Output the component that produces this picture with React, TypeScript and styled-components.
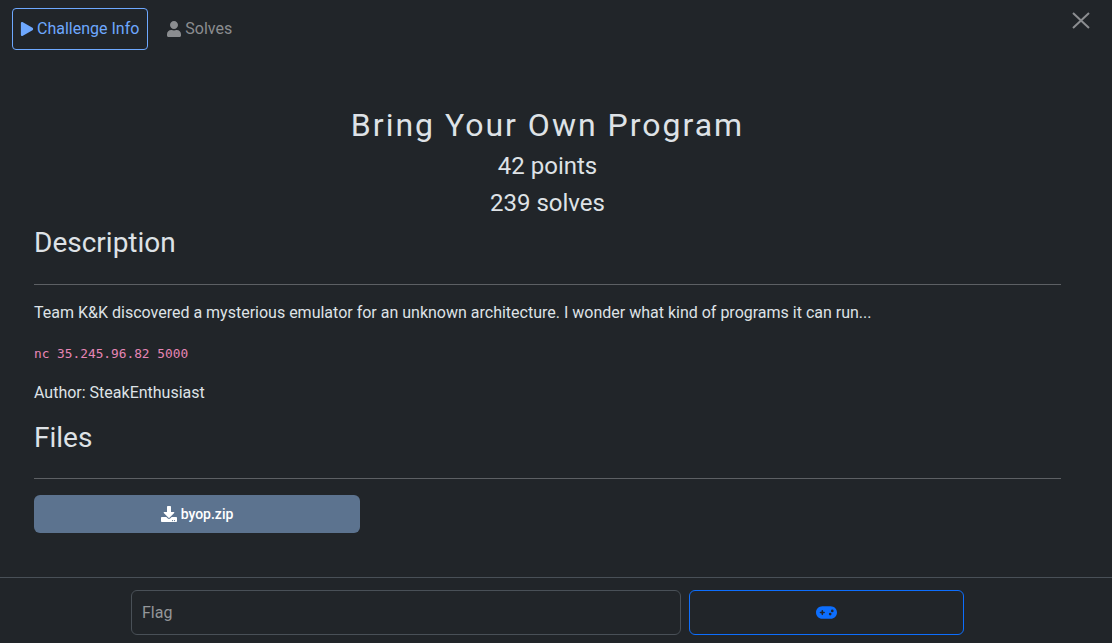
import { FC } from "react";
import styled, { createGlobalStyle } from "styled-components";
import { FaDownload, FaPlay, FaUser } from "react-icons/fa";
import { FaGamepad } from "react-icons/fa6";

const GlobalStyle = createGlobalStyle`
  html, body {
    margin: 0;
    height: 100%;
    background-color: #212529;
  }
  * { box-sizing: border-box; }
`;

const Modal = styled.div`
  width: 1112px;
  height: 643px;
  display: flex;
  flex-direction: column;
  overflow: hidden;
  background-color: #212529;
  color: #dee2e6;
  font-family: Roboto, "Liberation Sans", sans-serif;
  font-size: 16px;
  line-height: 24px;
`;

const TabBar = styled.nav`
  display: flex;
  align-items: flex-start;
  justify-content: space-between;
  padding: 8px 22px 0 12px;
`;

const Tabs = styled.div`
  display: flex;
  gap: 9px;
`;

const Tab = styled.button<{ $active?: boolean }>`
  display: flex;
  align-items: center;
  gap: 3px;
  height: 42px;
  padding: 0 8px 0 ${p => (p.$active ? "7px" : "8px")};
  border: 1px solid ${p => (p.$active ? "#6ea8fe" : "transparent")};
  border-radius: 4px;
  background: none;
  color: ${p => (p.$active ? "#6ea8fe" : "#8b8d90")};
  font: inherit;
  font-size: 16px;
`;

const CloseBtn = styled.button`
  padding: 0;
  margin-top: 4px;
  display: block;
  width: 18px;
  height: 17px;
  border: none;
  background: none;
  color: #8b8d90;
`;

const Body = styled.main`
  flex: 1;
  padding: 56px 51px 0 34px;
`;

const Header = styled.header`
  text-align: center;
  margin-bottom: 6px;
`;

const Title = styled.h1`
  margin: 0 0 8px;
  font-size: 32px;
  line-height: 1.2;
  font-weight: 400;
  letter-spacing: 2px;
`;

const Stat = styled.div`
  font-size: 24px;
  line-height: 1.2;
  margin-bottom: 8px;
`;

const SectionTitle = styled.h2`
  margin: 0 0 24px;
  font-size: 28px;
  line-height: 1.2;
  font-weight: 400;
`;

const Rule = styled.hr`
  margin: 16px 0;
  border: none;
  border-top: 1px solid #5d6064;
`;

const Para = styled.p`
  margin: 0 0 16px;
`;

const Code = styled.code`
  display: block;
  margin-bottom: 16px;
  padding-top: 1px;
  font-family: "DejaVu Sans Mono", "Liberation Mono", monospace;
  font-size: 12.8px;
  line-height: 23px;
  color: #e685b5;
`;

const FileBtn = styled.a`
  display: flex;
  align-items: center;
  justify-content: center;
  gap: 4px;
  width: 326px;
  height: 38px;
  margin-top: 16px;
  border-radius: 6px;
  background-color: #5c738f;
  color: #fff;
  font-weight: 500;
  font-size: 14px;
`;

const Footer = styled.footer`
  display: flex;
  justify-content: center;
  gap: 8px;
  height: 66px;
  padding: 12px 148px 0 131px;
  border-top: 1px solid #495057;
`;

const FlagInput = styled.input`
  flex: none;
  width: 550px;
  height: 45px;
  padding: 0 10px;
  border: 1px solid #495057;
  border-radius: 6px;
  background: #212529;
  color: #dee2e6;
  font: inherit;

  &::placeholder {
    color: #94979a;
    opacity: 1;
  }
`;

const SubmitBtn = styled.button`
  flex: none;
  width: 275px;
  height: 45px;
  display: flex;
  align-items: center;
  justify-content: center;
  border: 1px solid #0d6efd;
  border-radius: 6px;
  background: none;
  color: #0d6efd;
`;

const App: FC = () => (
  <Modal>
    <GlobalStyle />
    <TabBar>
      <Tabs>
        <Tab $active>
          <FaPlay size={14} />
          Challenge Info
        </Tab>
        <Tab>
          <FaUser size={16} />
          Solves
        </Tab>
      </Tabs>
      <CloseBtn aria-label="Close">
        <svg width="18" height="17" viewBox="0 0 18 17">
          <path d="M1 1l16 15M17 1L1 16" stroke="currentColor" strokeWidth="2" fill="none" />
        </svg>
      </CloseBtn>
    </TabBar>
    <Body>
      <Header>
        <Title>Bring Your Own Program</Title>
        <Stat>42 points</Stat>
        <Stat>239 solves</Stat>
      </Header>
      <SectionTitle>Description</SectionTitle>
      <Rule />
      <Para>Team K&amp;K discovered a mysterious emulator for an unknown architecture. I wonder what kind of programs it can run...</Para>
      <Code>nc 35.245.96.82 5000</Code>
      <Para>Author: SteakEnthusiast</Para>
      <SectionTitle>Files</SectionTitle>
      <Rule />
      <FileBtn>
        <FaDownload size={16} />
        byop.zip
      </FileBtn>
    </Body>
    <Footer>
      <FlagInput placeholder="Flag" />
      <SubmitBtn aria-label="Submit">
        <FaGamepad size={21} />
      </SubmitBtn>
    </Footer>
  </Modal>
);

export default App;
